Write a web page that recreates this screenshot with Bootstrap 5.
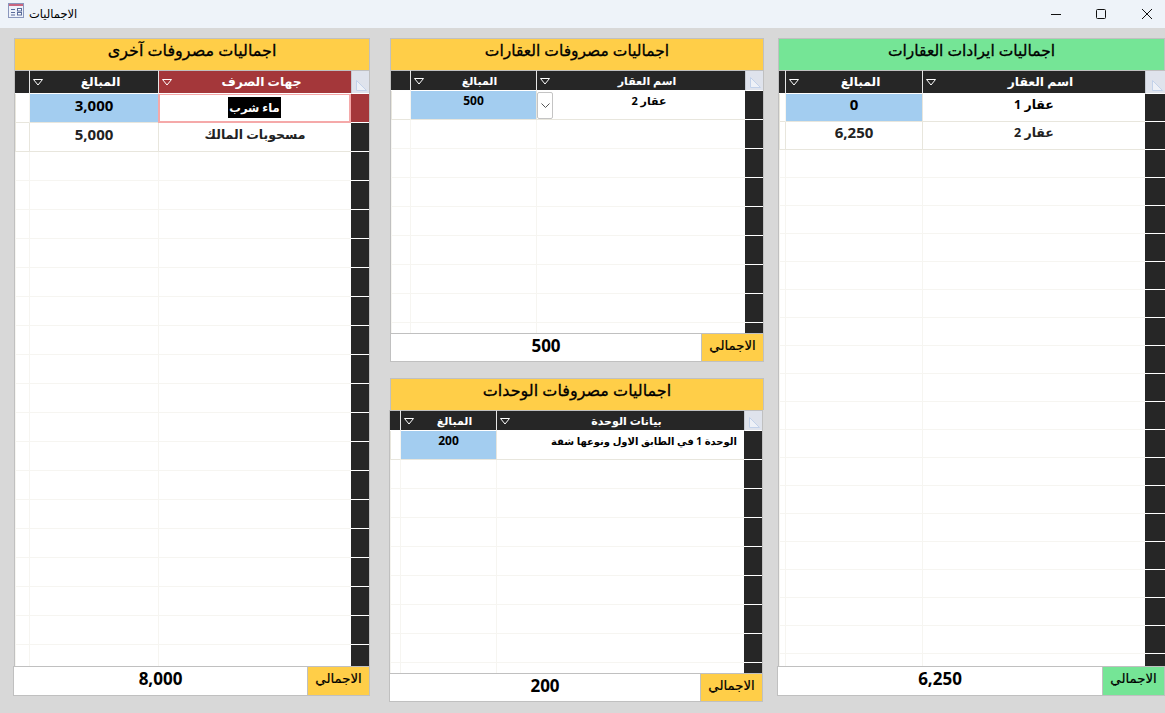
<!DOCTYPE html>
<html lang="ar">
<head>
<meta charset="utf-8">
<title>الاجماليات</title>
<link href="https://cdn.jsdelivr.net/npm/bootstrap@5.3.0/dist/css/bootstrap.min.css" rel="stylesheet">
<style>
html,body{height:713px;overflow:hidden}
body{background:#d8d8d8;font-family:"Open Sans","DejaVu Sans",sans-serif;color:#000;direction:ltr}
.titlebar{height:28px;background:#eef3f9;padding-left:8px;font-size:12px}
.titlebar .ttl{margin-left:5px;font-size:11.5px}
.app-ico{align-self:flex-start;margin-top:3px}
.winbtns{margin-left:auto;gap:35px;padding-right:13px}
.winbtns .win-close{margin-left:1px}
.stage{padding-left:13px;height:685px}
.col-a{width:357px}.col-b{width:374px;margin-left:20px}.col-c{width:388px;margin-left:13px}
.col-a,.col-b,.col-c{flex:none}
.pane{display:flex;flex-direction:column}
.pane-a{margin-top:10px;height:658px}
.pane-b{margin-top:10px;height:324px}
.pane-c{margin-top:16px;height:324px;margin-left:-1px;margin-right:1px}
.pane-d{margin-top:10px;height:658px}
.pane-head{flex:none;height:32px;margin-left:1px;background:#ffce48;border:1px solid #c0c0c0;border-bottom:0;font-size:15.5px;font-weight:400;line-height:23px;text-align:center;-webkit-text-stroke:.3px #000}
.pane-a .pane-head,.pane-c .pane-head{font-size:16px}
.pane-b .pane-head{margin-left:0}
.pane-c .pane-head{margin-left:1px;margin-right:-1px}
.pane-head.green{background:#75e596}
.sheet-wrap{flex:1 1 0;min-height:0;overflow:hidden;margin-left:1px;background:#fff;border-left:1px solid #c0c0c0;border-right:1px solid #c0c0c0}
.pane-b .sheet-wrap,.pane-c .sheet-wrap{margin-left:0}
.pane-d .sheet-wrap{border-right:0}
.sheet.table{table-layout:fixed;border-collapse:separate;border-spacing:0;margin:0;width:auto;--bs-table-bg:#fff}
.sheet.table>*>tr>*{padding:0;border:0;border-bottom:1px solid #f6f5f1;border-left:1px solid #f6f5f1;box-shadow:none;overflow:hidden;white-space:nowrap;text-align:center;font-weight:700;color:#222;vertical-align:middle;font-size:15px;line-height:20px}
.sheet.table>tbody>tr{height:29px}
.rows28.table>tbody>tr{height:28px}
.sheet.table>thead>tr>th{background:#262626;color:#fff;height:24px;font-size:12.300px;font-weight:700;border-bottom:1px solid #fff;border-left:1px solid #e6e6e6;border-top:1px solid #c0c0c0;position:relative;padding-left:13px}
.short.table>thead>tr>th{height:21px;font-size:11px;line-height:15px;padding-left:12px}
.sheet.table>thead>tr>th.dark0{border-left:0;padding-left:0}
.sheet.table>thead>tr>th.hot{background:#a4373a}
.sheet.table>thead>tr>th.corner{background:#dfe3ec;border-left:1px solid #c6cad2;padding-left:0}
.sheet.table>tbody>tr>td.stub{background:#262626;border-bottom:1px solid #fff;border-left:0}
.sheet.table>tbody>tr>td.stub.hot{background:#a4373a}
.sheet.table>tbody>tr>td.used{border-bottom-color:#e8e6dd;border-left-color:#e8e6dd}
.sheet.table>tbody>tr>td.amt{background:#a3cdf0;color:#000;border-bottom-color:#e8e6dd}
.sheet.table>tbody>tr>td.cur{border:2px solid #f5a9a9;border-top-width:1px}
.sheet.table>tbody>tr>td.blk{color:#000}
.sheet.table>tbody>tr>td.ar{font-size:12.5px;padding-bottom:5px}
.sheet.table>tbody>tr>td.num{padding-bottom:7px}
.sheet.table>tbody>tr>td.small-cell{font-size:12px;vertical-align:top;line-height:18px;color:#000;padding-top:1px}
.sheet.table>tbody>tr>td.txt-r{text-align:right;padding-right:7px;padding-top:1px;font-size:10px;vertical-align:top;line-height:18px;color:#000}
.small-cell .ar-in{font-size:11px}
.sheet.table>tbody>tr>td.cur.ar{padding-bottom:2px}
.sel-text{background:#000;color:#fff;padding:0 1px;display:inline-block;line-height:21px;font-size:11.500px}
.drop{position:absolute;left:3px;top:50%;margin-top:-3px;width:10px;height:7px;display:block}
.corner-tri{position:absolute;right:2px;bottom:2px;width:11px;height:11px;display:block}
.combo{float:left;width:16px;height:27px;margin:0 0 0 0;background:#fff;border:1px solid #c4c4c4;border-radius:2px;display:flex;align-items:center;justify-content:center}
.w-a1{width:14px}.w-a2{width:129px}.w-a3{width:193px}.w-a4{width:18px}
.w-b1{width:19px}.w-b2{width:126px}.w-b3{width:209px}.w-b4{width:18px}
.w-c1{width:10px}.w-c2{width:96px}.w-c3{width:248px}.w-c4{width:18px}
.w-d1{width:6px}.w-d2{width:137px}.w-d3{width:223px}.w-d4{width:20px}
.foot{flex:none;height:30px;background:#fff;border:1px solid #c0c0c0}
.pane-b .foot,.pane-c .foot{height:29px}
.foot-val{flex:1 1 0;text-align:center;font-size:17px;font-weight:700;line-height:24px;border-right:1px solid #c0c0c0}
.foot-lab{flex:none;width:61px;background:#ffce48;font-size:13.300px;line-height:22px;text-align:center;font-weight:400;-webkit-text-stroke:.2px #000}
.foot-lab.green{background:#75e596}
</style>
</head>
<body>
<div class="titlebar d-flex align-items-center">
  <svg class="app-ico" width="16" height="15" viewBox="0 0 16 15"><rect x=".5" y=".5" width="15" height="14" fill="#eef2fa" stroke="#8a97bd"/><rect x="1" y="1" width="14" height="2" fill="#c9657f"/><path d="M3 6.500h4M3 9.500h4M3 12h4" stroke="#5a6b9a" fill="none"/><rect x="9.500" y="5.500" width="4" height="2.500" fill="#fff" stroke="#5a6b9a"/><rect x="9.500" y="9.500" width="4" height="2.500" fill="#fff" stroke="#5a6b9a"/></svg>
  <span class="ttl" dir="rtl">الاجماليات</span>
  <div class="winbtns d-flex align-items-center">
    <svg width="10" height="10" viewBox="0 0 10 10"><path d="M0 5.500h10" stroke="#111"/></svg>
    <svg width="10" height="10" viewBox="0 0 10 10"><rect x=".5" y=".5" width="9" height="9" rx="1" fill="none" stroke="#111"/></svg>
    <svg class="win-close" width="10" height="10" viewBox="0 0 10 10"><path d="M0 0l10 10M10 0L0 10" stroke="#111"/></svg>
  </div>
</div>
<div class="stage d-flex">

  <div class="col-a">
    <section class="pane pane-a">
      <div class="pane-head" dir="rtl">اجماليات مصروفات آخرى</div>
      <div class="sheet-wrap">
        <table class="table sheet">
          <colgroup><col class="w-a1"><col class="w-a2"><col class="w-a3"><col class="w-a4"></colgroup>
          <thead><tr>
            <th class="dark0"></th>
            <th dir="rtl">المبالغ<svg class="drop" viewBox="0 0 10 7"><path d="M.5.500h9L5 6z" fill="none" stroke="#fff"/></svg></th>
            <th class="hot" dir="rtl">جهات الصرف<svg class="drop" viewBox="0 0 10 7"><path d="M.5.500h9L5 6z" fill="none" stroke="#fff"/></svg></th>
            <th class="corner"><svg class="corner-tri" viewBox="0 0 11 11"><path d="M.5.500l10 10H.5z" fill="#eef1f7" stroke="#c3d2ea"/></svg></th>
          </tr></thead>
          <tbody>
            <tr><td class="used"></td><td class="amt num">3,000</td><td class="cur blk ar" dir="rtl"><span class="sel-text">ماء شرب</span></td><td class="stub hot"></td></tr>
            <tr><td class="used"></td><td class="used num">5,000</td><td class="used ar" dir="rtl">مسحوبات المالك</td><td class="stub"></td></tr>
            <tr><td></td><td></td><td></td><td class="stub"></td></tr><tr><td></td><td></td><td></td><td class="stub"></td></tr>
            <tr><td></td><td></td><td></td><td class="stub"></td></tr><tr><td></td><td></td><td></td><td class="stub"></td></tr>
            <tr><td></td><td></td><td></td><td class="stub"></td></tr><tr><td></td><td></td><td></td><td class="stub"></td></tr>
            <tr><td></td><td></td><td></td><td class="stub"></td></tr><tr><td></td><td></td><td></td><td class="stub"></td></tr>
            <tr><td></td><td></td><td></td><td class="stub"></td></tr><tr><td></td><td></td><td></td><td class="stub"></td></tr>
            <tr><td></td><td></td><td></td><td class="stub"></td></tr><tr><td></td><td></td><td></td><td class="stub"></td></tr>
            <tr><td></td><td></td><td></td><td class="stub"></td></tr><tr><td></td><td></td><td></td><td class="stub"></td></tr>
            <tr><td></td><td></td><td></td><td class="stub"></td></tr><tr><td></td><td></td><td></td><td class="stub"></td></tr>
            <tr><td></td><td></td><td></td><td class="stub"></td></tr><tr><td></td><td></td><td></td><td class="stub"></td></tr>
          </tbody>
        </table>
      </div>
      <div class="foot d-flex"><div class="foot-val">8,000</div><div class="foot-lab" dir="rtl">الاجمالي</div></div>
    </section>
  </div>

  <div class="col-b">
    <section class="pane pane-b">
      <div class="pane-head" dir="rtl">اجماليات مصروفات العقارات</div>
      <div class="sheet-wrap">
        <table class="table sheet short">
          <colgroup><col class="w-b1"><col class="w-b2"><col class="w-b3"><col class="w-b4"></colgroup>
          <thead><tr>
            <th class="dark0"></th>
            <th dir="rtl">المبالغ<svg class="drop" viewBox="0 0 10 7"><path d="M.5.500h9L5 6z" fill="none" stroke="#fff"/></svg></th>
            <th dir="rtl">اسم العقار<svg class="drop" viewBox="0 0 10 7"><path d="M.5.500h9L5 6z" fill="none" stroke="#fff"/></svg></th>
            <th class="corner"><svg class="corner-tri" viewBox="0 0 11 11"><path d="M.5.500l10 10H.5z" fill="#eef1f7" stroke="#c3d2ea"/></svg></th>
          </tr></thead>
          <tbody>
            <tr><td class="used"></td><td class="amt small-cell">500</td><td class="used small-cell"><span class="combo"><svg width="9" height="5" viewBox="0 0 9 5"><path d="M.5.500L4.500 4.500 8.500.5" fill="none" stroke="#555"/></svg></span><span class="ar-in" dir="rtl">عقار 2</span></td><td class="stub"></td></tr>
            <tr><td></td><td></td><td></td><td class="stub"></td></tr><tr><td></td><td></td><td></td><td class="stub"></td></tr>
            <tr><td></td><td></td><td></td><td class="stub"></td></tr><tr><td></td><td></td><td></td><td class="stub"></td></tr>
            <tr><td></td><td></td><td></td><td class="stub"></td></tr><tr><td></td><td></td><td></td><td class="stub"></td></tr>
            <tr><td></td><td></td><td></td><td class="stub"></td></tr><tr><td></td><td></td><td></td><td class="stub"></td></tr>
          </tbody>
        </table>
      </div>
      <div class="foot d-flex"><div class="foot-val">500</div><div class="foot-lab" dir="rtl">الاجمالي</div></div>
    </section>
    <section class="pane pane-c">
      <div class="pane-head" dir="rtl">اجماليات مصروفات الوحدات</div>
      <div class="sheet-wrap">
        <table class="table sheet short">
          <colgroup><col class="w-c1"><col class="w-c2"><col class="w-c3"><col class="w-c4"></colgroup>
          <thead><tr>
            <th class="dark0"></th>
            <th dir="rtl">المبالغ<svg class="drop" viewBox="0 0 10 7"><path d="M.5.500h9L5 6z" fill="none" stroke="#fff"/></svg></th>
            <th dir="rtl">بيانات الوحدة<svg class="drop" viewBox="0 0 10 7"><path d="M.5.500h9L5 6z" fill="none" stroke="#fff"/></svg></th>
            <th class="corner"><svg class="corner-tri" viewBox="0 0 11 11"><path d="M.5.500l10 10H.5z" fill="#eef1f7" stroke="#c3d2ea"/></svg></th>
          </tr></thead>
          <tbody>
            <tr><td class="used"></td><td class="amt small-cell">200</td><td class="used txt-r" dir="rtl">الوحدة 1 في الطابق الاول ونوعها شقة</td><td class="stub"></td></tr>
            <tr><td></td><td></td><td></td><td class="stub"></td></tr><tr><td></td><td></td><td></td><td class="stub"></td></tr>
            <tr><td></td><td></td><td></td><td class="stub"></td></tr><tr><td></td><td></td><td></td><td class="stub"></td></tr>
            <tr><td></td><td></td><td></td><td class="stub"></td></tr><tr><td></td><td></td><td></td><td class="stub"></td></tr>
            <tr><td></td><td></td><td></td><td class="stub"></td></tr><tr><td></td><td></td><td></td><td class="stub"></td></tr>
            <tr><td></td><td></td><td></td><td class="stub"></td></tr>
          </tbody>
        </table>
      </div>
      <div class="foot d-flex"><div class="foot-val">200</div><div class="foot-lab" dir="rtl">الاجمالي</div></div>
    </section>
  </div>

  <div class="col-c">
    <section class="pane pane-d">
      <div class="pane-head green" dir="rtl">اجماليات ايرادات العقارات</div>
      <div class="sheet-wrap">
        <table class="table sheet rows28">
          <colgroup><col class="w-d1"><col class="w-d2"><col class="w-d3"><col class="w-d4"></colgroup>
          <thead><tr>
            <th class="dark0"></th>
            <th dir="rtl">المبالغ<svg class="drop" viewBox="0 0 10 7"><path d="M.5.500h9L5 6z" fill="none" stroke="#fff"/></svg></th>
            <th dir="rtl">اسم العقار<svg class="drop" viewBox="0 0 10 7"><path d="M.5.500h9L5 6z" fill="none" stroke="#fff"/></svg></th>
            <th class="corner"><svg class="corner-tri" viewBox="0 0 11 11"><path d="M.5.500l10 10H.5z" fill="#eef1f7" stroke="#c3d2ea"/></svg></th>
          </tr></thead>
          <tbody>
            <tr><td class="used"></td><td class="amt num">0</td><td class="used blk ar" dir="rtl">عقار 1</td><td class="stub"></td></tr>
            <tr><td class="used"></td><td class="used num">6,250</td><td class="used ar" dir="rtl">عقار 2</td><td class="stub"></td></tr>
            <tr><td></td><td></td><td></td><td class="stub"></td></tr><tr><td></td><td></td><td></td><td class="stub"></td></tr>
            <tr><td></td><td></td><td></td><td class="stub"></td></tr><tr><td></td><td></td><td></td><td class="stub"></td></tr>
            <tr><td></td><td></td><td></td><td class="stub"></td></tr><tr><td></td><td></td><td></td><td class="stub"></td></tr>
            <tr><td></td><td></td><td></td><td class="stub"></td></tr><tr><td></td><td></td><td></td><td class="stub"></td></tr>
            <tr><td></td><td></td><td></td><td class="stub"></td></tr><tr><td></td><td></td><td></td><td class="stub"></td></tr>
            <tr><td></td><td></td><td></td><td class="stub"></td></tr><tr><td></td><td></td><td></td><td class="stub"></td></tr>
            <tr><td></td><td></td><td></td><td class="stub"></td></tr><tr><td></td><td></td><td></td><td class="stub"></td></tr>
            <tr><td></td><td></td><td></td><td class="stub"></td></tr><tr><td></td><td></td><td></td><td class="stub"></td></tr>
            <tr><td></td><td></td><td></td><td class="stub"></td></tr><tr><td></td><td></td><td></td><td class="stub"></td></tr>
            <tr><td></td><td></td><td></td><td class="stub"></td></tr><tr><td></td><td></td><td></td><td class="stub"></td></tr>
          </tbody>
        </table>
      </div>
      <div class="foot d-flex"><div class="foot-val">6,250</div><div class="foot-lab green" dir="rtl">الاجمالي</div></div>
    </section>
  </div>

</div>
<script src="https://cdn.jsdelivr.net/npm/bootstrap@5.3.0/dist/js/bootstrap.bundle.min.js"></script>
</body>
</html>
